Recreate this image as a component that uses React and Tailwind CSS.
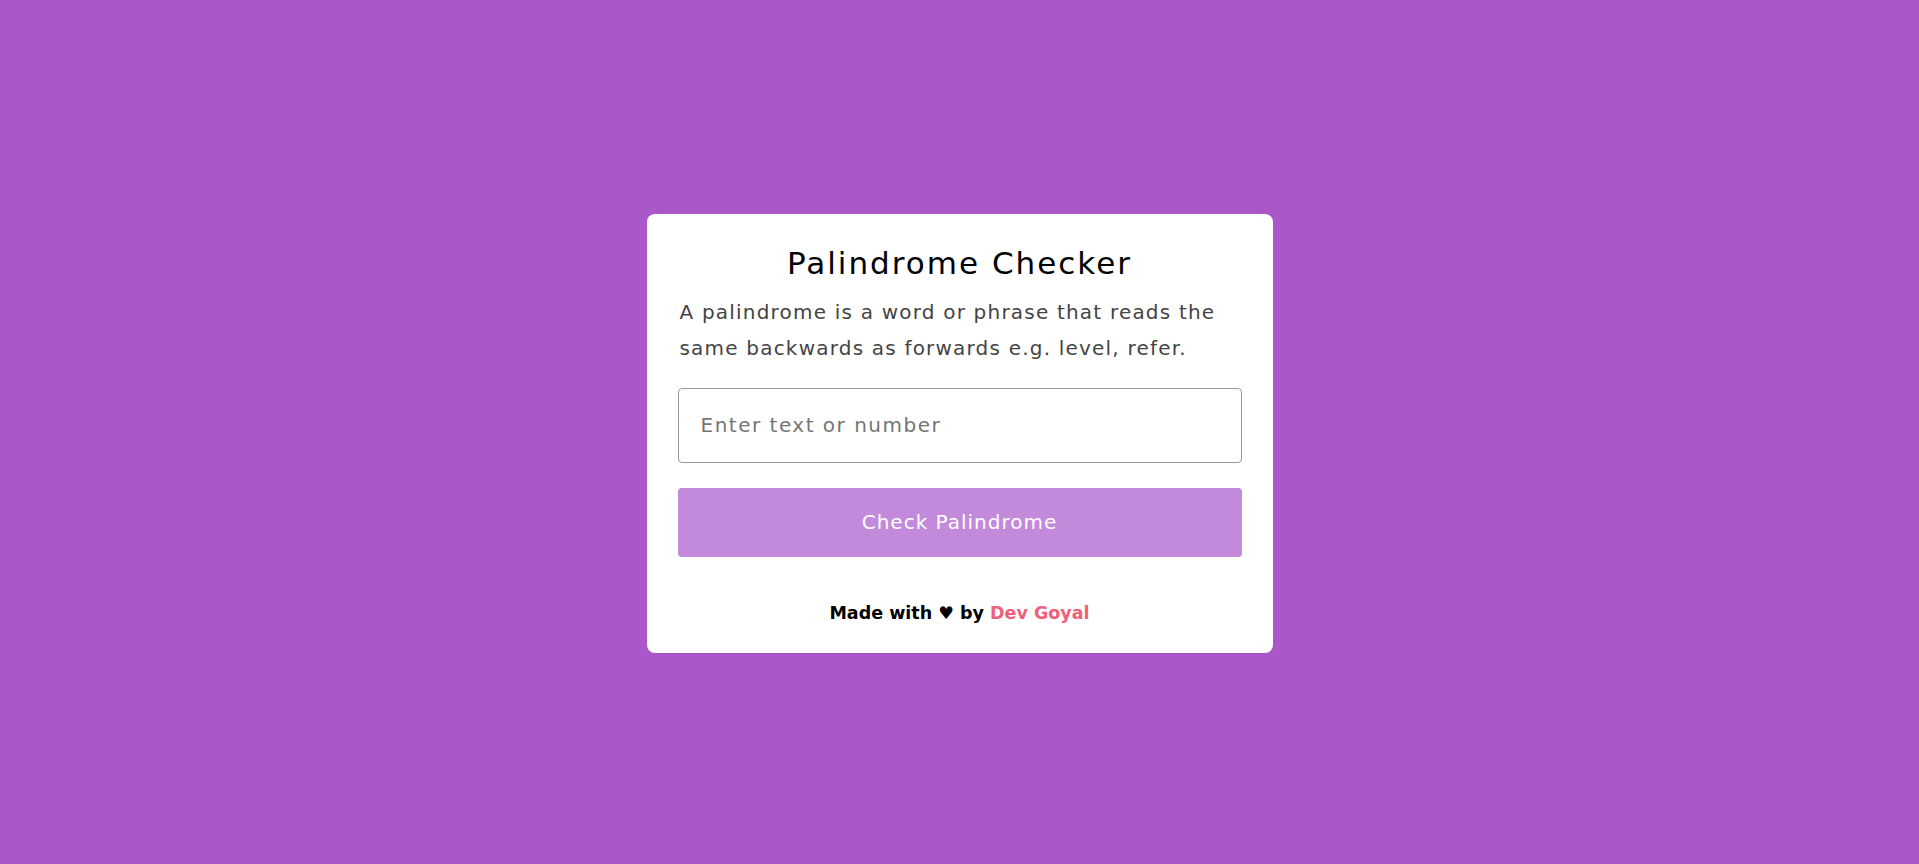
import React from 'react';

const App = () => {
  return (
    <div
      className="min-h-screen w-full bg-[#aa57c9] flex items-center justify-center"
      style={{ fontFamily: '"DejaVu Sans", "Noto Sans", sans-serif' }}
    >
      <div className="mt-[2px] w-[626px] bg-white rounded-[8px] px-[31px] pt-[28px] pb-[26px]">
        <h1 className="text-[31px] leading-[42px] font-normal tracking-[2px] text-black text-center">
          Palindrome Checker
        </h1>
        <p className="mt-[10px] pl-[2px] text-[20px] leading-[36px] tracking-[1.2px] text-[#444]">
          A palindrome is a word or phrase that reads the same backwards as forwards e.g. level, refer.
        </p>
        <input
          type="text"
          placeholder="Enter text or number"
          className="mt-[22px] block w-full h-[75px] px-[22px] border border-[#999] rounded-[4px] text-[20px] tracking-[1.5px] text-[#333] placeholder:text-[#757575] outline-none"
        />
        <button className="mt-[25px] block w-full h-[69px] rounded-[4px] bg-[#c389db] text-white text-[20px] tracking-[1px]">
          Check Palindrome
        </button>
        <p className="mt-[43px] text-center text-[17.5px] leading-[27px] font-bold text-black">
          Made with ♥ by <span className="text-[#f0607a]">Dev Goyal</span>
        </p>
      </div>
    </div>
  );
};

export default App;
